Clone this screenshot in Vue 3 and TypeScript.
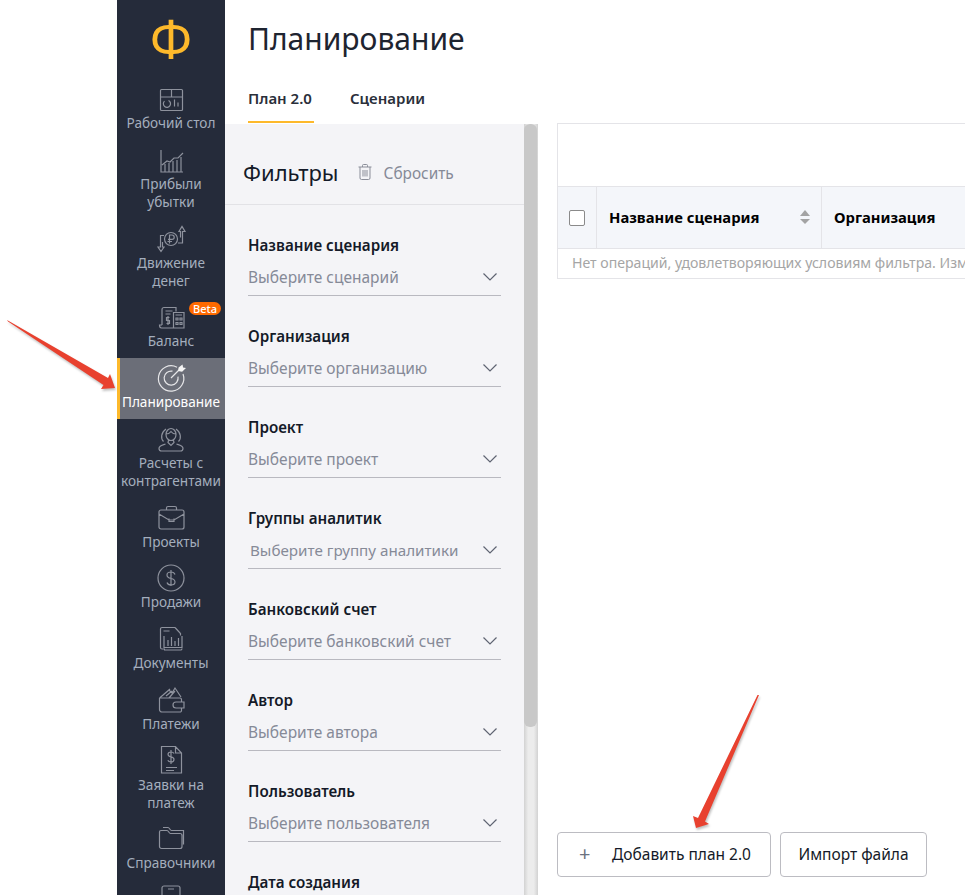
<script setup lang="ts">
interface NavItem {
  lines: string[]
  icon: string
  fill?: string
  active?: boolean
  beta?: boolean
}

const navItems: NavItem[] = [
  {
    lines: ['Рабочий стол'],
    icon: 'M4.500 3.500h20a1 1 0 0 1 1 1v19a1 1 0 0 1-1 1h-20a1 1 0 0 1-1-1v-19a1 1 0 0 1 1-1z M3.500 11h22 M14.500 3.500V11 M11.500 14.500a3.600 3.600 0 1 1-4 .6 M17.500 13.500v7 M21 16.500v4',
  },
  {
    lines: ['Прибыли', 'убытки'],
    icon: 'M4 3v22h22 M5 18l5-4 3 1 4-4 4 0 5-5 M8 25v-8 M12 25v-9 M16 25v-11 M20 25v-12 M24 25v-15',
  },
  {
    lines: ['Движение', 'денег'],
    icon: 'M20.500 13a6.500 6.500 0 1 1-13 0a6.500 6.500 0 1 1 13 0z M12.500 17.500v-8.500h2.500a2.200 2.200 0 0 1 0 4.400h-4 M10.500 15.500h4.500 M21 17h4.500V5.500H28L25 .5 22 5.500h1.500v6 M7 9.500H3.500V21H1l3 4.500 3-4.500H5.500v-5',
  },
  {
    lines: ['Баланс'],
    beta: true,
    icon: 'M5 21V5.500a2 2 0 0 1 2-2h12v4 M5 21H2.500c0 1.500.5 3 2 3h11.500 M8.500 7h7 M8.500 10h5 M12.500 13.500H9.500v3h3v3h-3 M11 12v9 M16.500 8.500h10.500v15.500H16.500z M18.500 11h6.500 M19 14h2v2h-2z M23 14h2v2h-2z M19 18.500h2v2h-2z M23 18.500h2v2h-2z',
  },
  {
    lines: ['Планирование'],
    active: true,
    icon: 'M20 2.200A12.700 12.700 0 1 0 26 9 M15.500 6.200a7 7 0 1 0 5.500 5.500 M14 13l8-8',
    fill: 'M21 6l.6-3.500L25.500 -.5l.6 3 2.900.4-3.900 3.900z',
  },
  {
    lines: ['Расчеты с', 'контрагентами'],
    icon: 'M9 8.500a5 6 0 1 1 10 0a5 6 0 1 1-10 0z M8.500 18c-3 1-6.500 1.800-6.500 4.200 0 1.600 1 2.800 2.500 2.800h19c1.500 0 2.500-1.200 2.500-2.800 0-2.400-3.500-3.200-6.500-4.200 M11.500 14.500l-.5 2 3 3 3-3-.5-2 M6.500 15.500c-3-3-2.500-9 2.500-12.500 M21.500 15.500c3-3 2.500-9-2.500-12.500 M9 8c2.500 0 4-1 5-2.500 1 1.500 2.500 2.500 5 2.500',
  },
  {
    lines: ['Проекты'],
    icon: 'M4 5h21a2 2 0 0 1 2 2v15a2 2 0 0 1-2 2H4a2 2 0 0 1-2-2V7a2 2 0 0 1 2-2z M9.500 5V3a1.500 1.500 0 0 1 1.500-1.500h7A1.500 1.500 0 0 1 19.500 3v2 M2 9l10 6h5l10-6 M12 13.500v3h5v-3',
  },
  {
    lines: ['Продажи'],
    icon: 'M27 13a13 13 0 1 1-26 0a13 13 0 1 1 26 0z M18 9.500c-.5-1.500-2-2.500-4-2.500s-4 1-4 3 1.500 3 4 3.500 4 1.500 4 3.500-2 3-4 3-3.500-1-4-2.500 M14 5v16',
  },
  {
    lines: ['Документы'],
    icon: 'M18 1.500H5a1.500 1.500 0 0 0-1.500 1.500v18.500A1.500 1.500 0 0 0 5 23h3 M18 1.500l5.500 6v2 M6.500 5h6 M7 10v11.500h18V10 M7 24h16.500a1.500 1.500 0 0 0 1.500-1.500 M11 20v-6 M14.500 20v-9 M18 20v-5 M21.500 20v-8',
  },
  {
    lines: ['Платежи'],
    icon: 'M3 11h20a1.500 1.500 0 0 1 1.500 1.500V15 M24.500 21v2.500A1.500 1.500 0 0 1 23 25H5a2.500 2.500 0 0 1-2.500-2.500V11 M19 15h8v6h-8a3 3 0 0 1 0-6z M2.500 11L12 3l3 3 3-5 6 9 M6 8l7-6 M9 9l6-5 M12 11l6-7',
  },
  {
    lines: ['Заявки на', 'платеж'],
    icon: 'M4.500 -1.500h14l6 6.500v20h-20z M18.500 -1.500V5h6 M9 19.500h11 M9 22.500h8 M17 5.500c-.5-1-1.500-1.500-3-1.500s-3 .8-3 2.300 1.300 2.200 3 2.600 3 1.200 3 2.600-1.400 2.500-3 2.500-2.700-.6-3.200-1.700 M14 2v14',
  },
  {
    lines: ['Справочники'],
    icon: 'M2.500 7V6a1.500 1.500 0 0 1 1.500-1.500h6c1.500 0 2 3 3.500 3H23a2 2 0 0 1 2 2v11a2 2 0 0 1-2 2H4.500a2 2 0 0 1-2-2V7z M6 1.500h5c1.500 0 2 3 3.500 3h12v14',
  },
  {
    lines: [],
    icon: 'M7 -1h14a2 2 0 0 1 2 2v26H5V1a2 2 0 0 1 2-2z M11 2h6',
  },
]

const filters = [
  { label: 'Название сценария', placeholder: 'Выберите сценарий' },
  { label: 'Организация', placeholder: 'Выберите организацию' },
  { label: 'Проект', placeholder: 'Выберите проект' },
  { label: 'Группы аналитик', placeholder: 'Выберите группу аналитики', shifted: true },
  { label: 'Банковский счет', placeholder: 'Выберите банковский счет' },
  { label: 'Автор', placeholder: 'Выберите автора' },
  { label: 'Пользователь', placeholder: 'Выберите пользователя' },
  { label: 'Дата создания', placeholder: '' },
]
</script>

<template>
  <div class="page">
    <aside class="sidebar">
      <div class="logo">Ф</div>
      <a
        v-for="item in navItems"
        :key="item.icon"
        class="nav-item"
        :class="{ 'nav-item--active': item.active }"
      >
        <svg class="nav-icon" viewBox="0 0 28 28">
          <path :d="item.icon" />
          <path v-if="item.fill" class="nav-icon__fill" :d="item.fill" />
        </svg>
        <span v-for="line in item.lines" :key="line" class="nav-label">{{ line }}</span>
        <span v-if="item.beta" class="beta">Beta</span>
      </a>
    </aside>

    <div class="content">
      <header class="header">
        <h1>Планирование</h1>
        <nav class="tabs">
          <a class="tab tab--active">План 2.0</a>
          <a class="tab">Сценарии</a>
        </nav>
      </header>

      <div class="body">
        <section class="filters">
          <div class="filters__head">
            <h2>Фильтры</h2>
            <svg class="trash" viewBox="0 0 14 16">
              <path d="M.5 3h13 M4.500 3V1.500a1 1 0 0 1 1-1h3a1 1 0 0 1 1 1V3 M2 3v11a1.500 1.500 0 0 0 1.500 1.500h7A1.500 1.500 0 0 0 12 14V3 M5 6v6.500 M7 6v6.500 M9 6v6.500" />
            </svg>
            <span class="filters__reset">Сбросить</span>
          </div>
          <div class="filters__list">
            <div v-for="filter in filters" :key="filter.label" class="field">
              <div class="field__label">{{ filter.label }}</div>
              <div class="field__control">
                <span :class="{ 'field__value--shifted': filter.shifted }">{{ filter.placeholder }}</span>
                <svg class="chevron" viewBox="0 0 14 8">
                  <path d="M.5 .5L7 7l6.500-6.500" />
                </svg>
              </div>
            </div>
          </div>
        </section>
        <div class="scrollbar"><div class="scrollbar__thumb"></div></div>

        <main class="main">
          <div class="grid">
            <div class="grid__band"></div>
            <div class="grid__head">
              <div class="cell cell--check"><span class="checkbox"></span></div>
              <div class="cell cell--name">
                Название сценария
                <span class="sort"></span>
              </div>
              <div class="cell cell--org">Организация</div>
            </div>
            <div class="grid__empty">Нет операций, удовлетворяющих условиям фильтра. Измените условия фильтра</div>
          </div>
          <div class="actions">
            <button class="btn btn--add" type="button"><span class="btn__plus">+</span>Добавить план 2.0</button>
            <button class="btn btn--import" type="button">Импорт файла</button>
          </div>
        </main>
      </div>
    </div>

    <svg class="arrows" viewBox="0 0 965 895">
      <polygon points="7,320 8,321.500 103.500,385 101,389 115,388 110,374 108,378" />
      <polygon points="759,695 757.500,695 698,818 693,816 696,828 709,824 705,821.500" />
    </svg>
  </div>
</template>

<style>
html,
body {
  margin: 0;
  height: 100%;
  overflow: hidden;
  background: #fff;
}
</style>

<style scoped>
.page {
  position: relative;
  display: flex;
  height: 895px;
  padding-left: 117px;
  overflow: hidden;
  box-sizing: border-box;
  font-family: "Noto Sans", "Open Sans", sans-serif;
  color: #1e2430;
}

.sidebar {
  flex: 0 0 108px;
  display: flex;
  flex-direction: column;
  overflow: hidden;
  background: #252b3a;
}

.logo {
  flex: 0 0 79px;
  color: #fdb92b;
  font-size: 52px;
  line-height: 76px;
  text-align: center;
}

.nav-item {
  position: relative;
  flex: none;
  display: flex;
  flex-direction: column;
  align-items: center;
  padding: 7px 0 7.750px;
  color: #a4aebd;
}

.nav-item--active {
  background: #6b6e78;
  box-shadow: inset 3px 0 0 #fdb92b;
  color: #fff;
}

.nav-icon {
  flex: none;
  width: 28px;
  height: 28px;
  overflow: visible;
  fill: none;
  stroke: #8e929d;
  stroke-width: 1.200;
}

.nav-item--active .nav-icon {
  stroke: #e6e6e8;
}

.nav-icon__fill {
  fill: #f4f4f4;
  stroke: none;
}

.nav-label {
  font-size: 13.600px;
  line-height: 18px;
  white-space: nowrap;
}

.beta {
  position: absolute;
  top: 5px;
  right: 4px;
  padding: 0 4px;
  border-radius: 7px;
  background: #ff6a00;
  color: #fff;
  font-size: 11px;
  font-weight: 500;
  line-height: 13px;
}

.content {
  flex: 1;
  min-width: 0;
  display: flex;
  flex-direction: column;
}

.header {
  flex: 0 0 123px;
  padding: 19px 0 0 23px;
  box-sizing: border-box;
}

.header h1 {
  margin: 0;
  font-size: 30px;
  font-weight: 400;
  line-height: 40px;
}

.tabs {
  display: flex;
  gap: 36px;
}

.tab {
  padding: 29px 0 13px;
  border-bottom: 2px solid transparent;
  font-size: 15px;
  font-weight: 600;
  line-height: 20px;
  color: #2a2f3a;
}

.tab--active {
  padding-right: 2px;
  border-bottom-color: #fdb92b;
}

.body {
  flex: 1;
  min-height: 0;
  display: flex;
}

.filters {
  flex: 0 0 299px;
  margin-top: 1px;
  overflow: hidden;
  background: #f4f4f7;
}

.filters__head {
  display: flex;
  align-items: center;
  height: 81px;
  box-sizing: border-box;
  padding: 30px 0 14px 18px;
  border-bottom: 1px solid #e2e2e6;
}

.filters__head h2 {
  margin: 0 19px 0 0;
  font-size: 22px;
  font-weight: 400;
  line-height: 36px;
  color: #141a28;
}

.trash {
  width: 14px;
  height: 16px;
  margin-right: 12px;
  fill: none;
  stroke: #8b8e99;
  stroke-width: 1;
}

.filters__reset {
  padding-top: 2px;
  font-size: 15.400px;
  color: #868a97;
}

.filters__list {
  padding: 30px 23px 0;
}

.field {
  margin-bottom: 30px;
}

.field__label {
  margin-bottom: 3px;
  font-size: 15.200px;
  font-weight: 600;
  line-height: 20px;
  color: #141a28;
}

.field__control {
  display: flex;
  align-items: center;
  justify-content: space-between;
  height: 37px;
  padding-right: 4px;
  border-bottom: 1px solid #b9b9c0;
  font-size: 15.500px;
  color: #868a97;
}

.field__value--shifted {
  padding-left: 2px;
  font-size: 15.200px;
}

.chevron {
  width: 14px;
  height: 8px;
  fill: none;
  stroke: #5f6472;
  stroke-width: 1.200;
}

.scrollbar {
  flex: 0 0 14px;
  margin-top: 1px;
  background: linear-gradient(to right, #d2d2d2, #ececec 30%, #ececec 70%, #d2d2d2);
}

.scrollbar__thumb {
  width: 13px;
  height: 603px;
  border-radius: 6px;
  background: #c8c8c8;
}

.main {
  flex: 1;
  min-width: 0;
  display: flex;
  flex-direction: column;
  padding: 0 0 18px 19px;
}

.grid {
  width: 500px;
  border: 1px solid #e4e4e8;
  border-right: 0;
  box-sizing: border-box;
}

.grid__band {
  height: 62px;
  border-bottom: 1px solid #e4e4e8;
}

.grid__head {
  display: flex;
  height: 61px;
  border-bottom: 1px solid #e4e4e8;
  background: #f4f6fa;
  font-size: 14.800px;
  font-weight: 700;
  color: #000;
}

.cell {
  position: relative;
  display: flex;
  align-items: center;
  box-sizing: border-box;
  padding-bottom: 2px;
  border-right: 1px solid #e4e4e8;
  white-space: nowrap;
}

.cell--check {
  flex: 0 0 39px;
  padding-left: 11px;
  padding-bottom: 0;
}

.cell--name {
  flex: 0 0 225px;
  padding-left: 12px;
}

.cell--org {
  flex: 1;
  padding-left: 12px;
  border-right: 0;
}

.checkbox {
  width: 16px;
  height: 16px;
  border: 1px solid #8a8a8a;
  border-radius: 2px;
  background: #fff;
  box-sizing: border-box;
}

.sort {
  position: absolute;
  top: 23px;
  right: 11px;
  width: 0;
  height: 0;
  border-right: 5px solid transparent;
  border-left: 5px solid transparent;
  border-bottom: 6px solid #a3a3a3;
}

.sort::after {
  content: "";
  position: absolute;
  top: 9px;
  left: -5px;
  width: 0;
  height: 0;
  border-right: 5px solid transparent;
  border-left: 5px solid transparent;
  border-top: 5px solid #a3a3a3;
}

.grid__empty {
  height: 29px;
  padding-left: 14px;
  overflow: hidden;
  font-size: 14.100px;
  line-height: 27px;
  white-space: nowrap;
  color: #a5a5a5;
}

.actions {
  display: flex;
  gap: 9px;
  margin-top: auto;
}

.btn {
  height: 45px;
  padding: 0 0 2px;
  border: 1px solid #bcbcc2;
  border-radius: 4px;
  background: #fff;
  box-sizing: border-box;
  font: inherit;
  font-size: 15.500px;
  color: #141a28;
}

.btn--add {
  display: flex;
  align-items: center;
  width: 214px;
  padding-left: 21px;
}

.btn--import {
  width: 147px;
}

.btn__plus {
  width: 33px;
  font-size: 20px;
  line-height: 1;
  text-align: left;
  color: #6b7280;
}

.arrows {
  position: absolute;
  top: 0;
  left: 0;
  width: 965px;
  height: 895px;
  fill: #e8412f;
  filter: drop-shadow(1px 2px 1px rgba(0, 0, 0, 0.25));
  pointer-events: none;
}
</style>
